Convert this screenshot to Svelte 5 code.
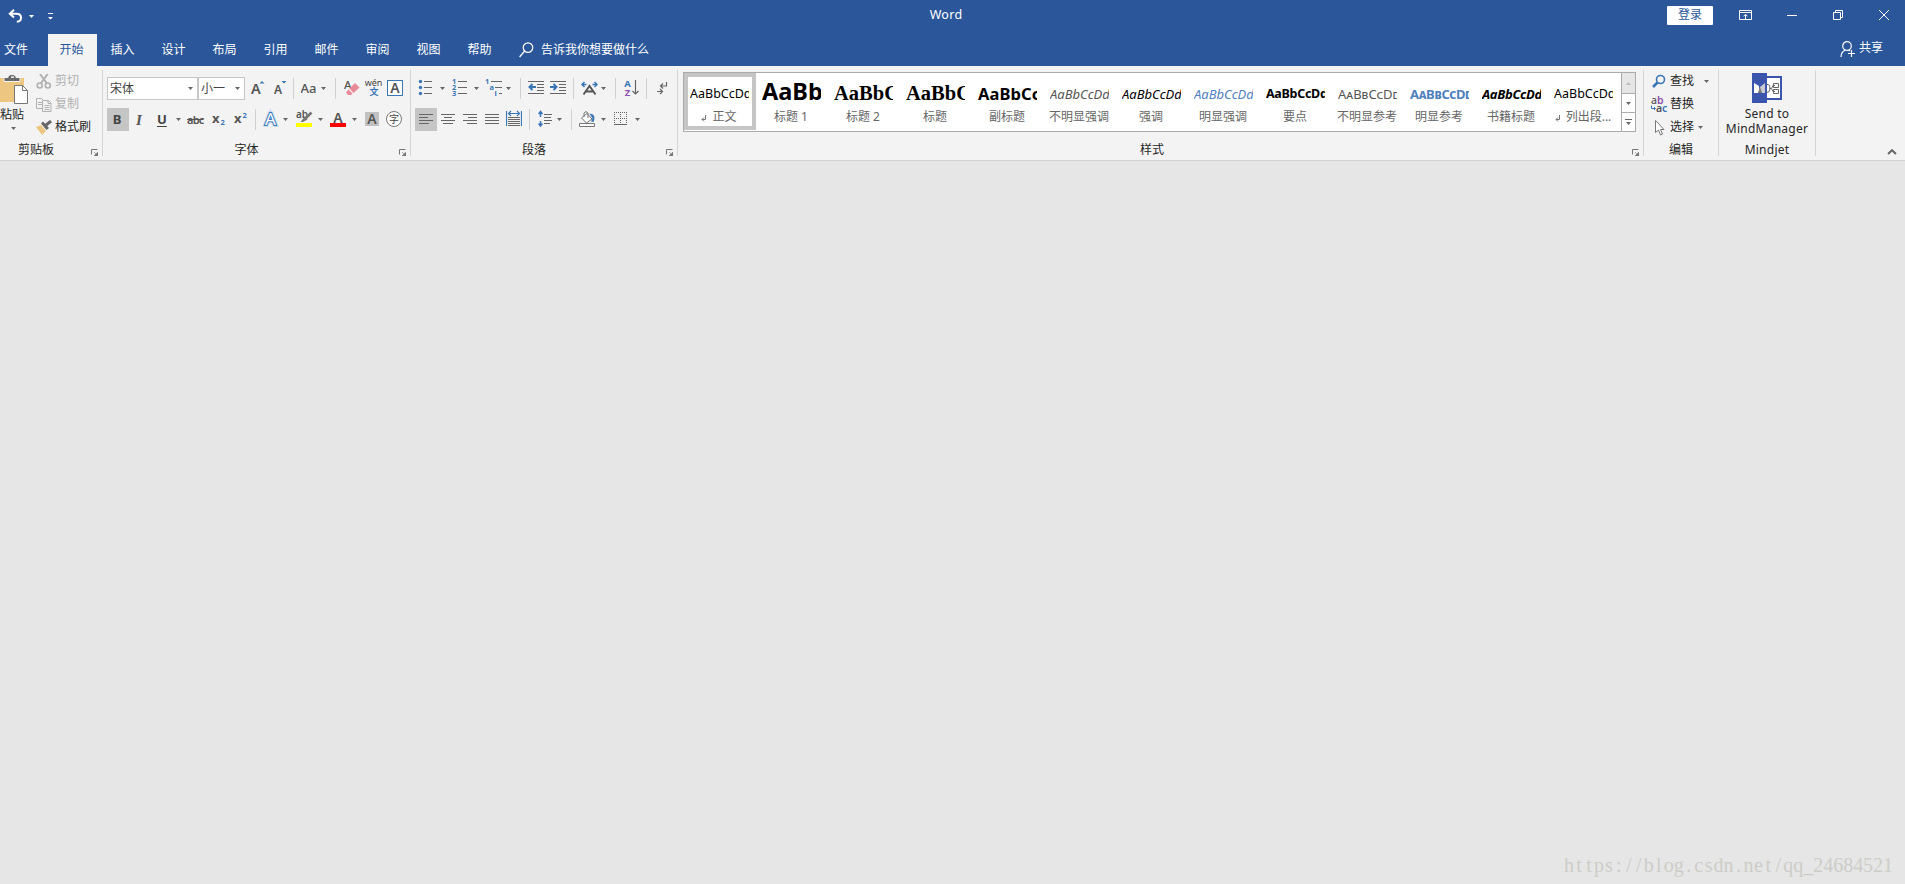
<script>
    const tabs = ["开始", "插入", "设计", "布局", "引用", "邮件", "审阅", "视图", "帮助"]
    const styles = [
        { name: "正文", look: "normal", mark: true },
        { name: "标题 1", look: "heading1" },
        { name: "标题 2", look: "heading2" },
        { name: "标题", look: "heading2" },
        { name: "副标题", look: "subtitle" },
        { name: "不明显强调", look: "italic subtle" },
        { name: "强调", look: "italic" },
        { name: "明显强调", look: "italic blue" },
        { name: "要点", look: "strong" },
        { name: "不明显参考", look: "caps subtle" },
        { name: "明显参考", look: "caps blue strong" },
        { name: "书籍标题", look: "italic strong" },
        { name: "列出段...", look: "normal", mark: true }
    ]
    const url = "https://blog.csdn.net/qq_24684521"
    // one x per glyph keeps the url monospaced
    const urlX = [...url].map((c, i) => 5 + i * 9.97).join(" ")

    let activeTab = $state("开始")
    let activeStyle = $state("正文")
    let bold = $state(true)
</script>

{#snippet caret()}
    <svg class="caret" width="5" height="3" viewBox="0 0 5 3"><path d="M0 0h5L2.5 3z"/></svg>
{/snippet}

{#snippet launcher()}
    <svg class="launcher" width="7" height="7" viewBox="0 0 7 7">
        <path d="M.5 5.5v-5h6" fill="none" stroke="#777"/>
        <path d="M7 3v4H3zM3 3l2 2" fill="#777" stroke="#777" stroke-width=".6"/>
    </svg>
{/snippet}

{#snippet lines(rows)}
    {#each rows as [x, y, w]}
        <rect {x} {y} width={w} height="1" fill="#666"/>
    {/each}
{/snippet}

<div class="word">
    <header class="titlebar">
        <div class="quick">
            <svg width="15" height="14" viewBox="0 0 15 14" fill="none" stroke="#fff" stroke-width="2">
                <path d="M6 .8L1.8 4.7 6 8.5M2 4.7h6.5c6 0 6 7.8.3 8"/>
            </svg>
            {@render caret()}
            <svg class="customize" width="5" height="7" viewBox="0 0 5 7" fill="#fff"><path d="M0 0h5v1H0zM0 4h5L2.5 6.6z"/></svg>
        </div>
        <div class="title">Word</div>
        <div class="window">
            <button class="login">登录</button>
            <svg width="13" height="10" viewBox="0 0 13 10" fill="none" stroke="#fff">
                <path d="M.5.5h12v9H.5zM.5 2.5h12M6.5 9V4.5M4.5 6.3l2-2 2 2"/>
            </svg>
            <svg width="10" height="10" viewBox="0 0 10 10"><path d="M0 5h10v1H0z" fill="#fff"/></svg>
            <svg width="10" height="10" viewBox="0 0 10 10" fill="none" stroke="#fff">
                <path d="M.5 2.5h7v7h-7zM2.5 2.5v-2h7v7h-2"/>
            </svg>
            <svg width="10" height="10" viewBox="0 0 10 10" stroke="#fff"><path d="M0 0l10 10M10 0L0 10"/></svg>
        </div>
    </header>

    <nav class="tabs">
        <button class="file">文件</button>
        {#each tabs as tab}
            <button class="tab" class:active={tab === activeTab} onclick={() => activeTab = tab}>{tab}</button>
        {/each}
        <svg class="lens" width="15" height="16" viewBox="0 0 15 16" fill="none" stroke="#fff" stroke-width="1.2">
            <circle cx="9" cy="5.6" r="4.8"/><path d="M5.6 9L.6 15"/>
        </svg>
        <span class="tell">告诉我你想要做什么</span>
        <svg class="person" width="16" height="17" viewBox="0 0 16 17" fill="none" stroke="#fff" stroke-width="1.2">
            <circle cx="7" cy="5" r="4.3"/><path d="M1 16c0-4 2-6 4.500-7M8.500 9l1.500 1M11.500 9v7M8 12.500h7"/>
        </svg>
        <span class="share">共享</span>
    </nav>

    <div class="ribbon">
        <section class="group clipboard">
            <div class="body">
                <div class="paste">
                    <svg width="28" height="31" viewBox="0 0 28 31">
                        <path d="M0 4h24v24H0z" fill="#edc681"/>
                        <path d="M4 7.500h16V3.500h-4c0-4-8-4-8 0H4z" fill="#6a6a6a" stroke="#f3f3f3"/>
                        <path d="M11 3.200h3" stroke="#f3f3f3" stroke-width="1.500"/>
                        <path d="M14.500 11.500h8l5 5v13h-13z" fill="#fff" stroke="#777"/>
                        <path d="M22.500 11.500v5h5" fill="none" stroke="#777"/>
                    </svg>
                    <span>粘贴</span>
                    {@render caret()}
                </div>
                <div class="actions">
                    <div class="action disabled">
                        <svg width="16" height="15" viewBox="0 0 16 15" fill="none" stroke="#b1b1b1" stroke-width="1.600">
                            <circle cx="3.700" cy="11.500" r="2.500"/><circle cx="11.800" cy="11.500" r="2.500"/>
                            <path d="M4 0l7 9.500M11.700 0L4.700 9.500" stroke-width="2"/>
                        </svg>
                        <span>剪切</span>
                    </div>
                    <div class="action disabled">
                        <svg width="16" height="15" viewBox="0 0 16 15" fill="#f3f3f3" stroke="#b1b1b1">
                            <path d="M.5 1.500h5l2 2v8h-7zM2 5.500h4M2 7.500h4"/>
                            <path d="M6.500 3.500h6l2.500 2.500v8.500H6.500zM12 3.500v3h3M8.500 8.500h5M8.500 10.500h5M8.500 12.500h5"/>
                        </svg>
                        <span>复制</span>
                    </div>
                    <div class="action">
                        <svg width="16" height="15" viewBox="0 0 16 15">
                            <path d="M0 7l5-2 5 6-4 4z" fill="#edc681"/>
                            <path d="M5 3.500l2-2 6 6.500-2.500 2z" fill="#666"/>
                            <path d="M9.500 5.500L15 1" stroke="#666" stroke-width="3"/>
                        </svg>
                        <span>格式刷</span>
                    </div>
                </div>
            </div>
            <footer><span>剪贴板</span>{@render launcher()}</footer>
        </section>

        <section class="group font">
            <div class="row font-top">
                <div class="combo"><span>宋体</span>{@render caret()}</div>
                <div class="combo size"><span>小一</span>{@render caret()}</div>
                <svg width="15" height="23" viewBox="0 0 15 23">
                    <text x="0" y="17" class="glyph" font-size="14.500">A</text><path d="M8.500 6.500h5L11 4z" fill="#3a76b5"/>
                </svg>
                <svg width="15" height="23" viewBox="0 0 15 23">
                    <text x="0" y="17" class="glyph" font-size="12">A</text><path d="M7.500 4h5L10 6.500z" fill="#3a76b5"/>
                </svg>
                <i class="sep"></i>
                <svg width="18" height="23" viewBox="0 0 18 23"><text x="-.5" y="15.500" class="glyph light" font-size="13">Aa</text></svg>
                {@render caret()}
                <i class="sep"></i>
                <svg width="16" height="23" viewBox="0 0 16 23">
                    <text x="0" y="12" class="glyph light" font-size="11.500">A</text>
                    <path d="M5.500 11.500L11 6l4.500 4.500-6 5.500z" fill="#e88a98"/><path d="M4.500 12.500l4 4-1.500 1.500H4l-2-2.500z" fill="#e88a98"/>
                </svg>
                <svg width="18" height="23" viewBox="0 0 18 23">
                    <text x="8.500" y="9" class="wen">wén</text><text x="9" y="18" class="cjk" font-size="9">文</text>
                </svg>
                <svg width="16" height="23" viewBox="0 0 16 23">
                    <rect x=".5" y="3.500" width="15" height="15" fill="#fff" stroke="#3a76b5"/>
                    <text x="8" y="16" class="glyph mid" font-size="14">A</text>
                </svg>
            </div>
            <div class="row font-bottom">
                <button class="toggle" class:on={bold} onclick={() => bold = !bold}><b>B</b></button>
                <span class="it">I</span>
                <span class="un">U</span>
                {@render caret()}
                <span class="strike">abc</span>
                <svg width="14" height="23" viewBox="0 0 14 23">
                    <text x="0" y="15" class="glyph heavy" font-size="13">x</text><text x="8.500" y="17" class="num">2</text>
                </svg>
                <svg width="14" height="23" viewBox="0 0 14 23">
                    <text x="0" y="15" class="glyph heavy" font-size="13">x</text><text x="8.500" y="10" class="num">2</text>
                </svg>
                <i class="sep"></i>
                <svg width="17" height="23" viewBox="0 0 17 23">
                    <text x="7.500" y="17" class="outline halo" font-size="17">A</text>
                    <text x="7.500" y="17" class="outline edge" font-size="17">A</text>
                    <text x="7.500" y="17" class="outline" font-size="17">A</text>
                </svg>
                {@render caret()}
                <svg width="17" height="23" viewBox="0 0 17 23">
                    <text x="0" y="10" class="glyph" font-size="10">ab</text>
                    <path d="M15.500 4.500L9 11" stroke="#777" stroke-width="2.500"/><path d="M8.500 9l3 2.500L7 14H4.500z" fill="#777"/>
                    <path d="M0 15h16v4H0z" fill="#ff0"/>
                </svg>
                {@render caret()}
                <svg width="16" height="23" viewBox="0 0 16 23">
                    <text x="8" y="15" class="glyph mid" font-size="14">A</text><path d="M0 15h16v4H0z" fill="#f00"/>
                </svg>
                {@render caret()}
                <svg width="14" height="23" viewBox="0 0 14 23">
                    <path d="M0 4h14v14H0z" fill="#c1c1c1"/><text x="7" y="16" class="glyph mid" font-size="14">A</text>
                </svg>
                <svg width="17" height="23" viewBox="0 0 17 23">
                    <circle cx="8" cy="11" r="7.500" fill="#fff" stroke="#777"/><text x="8" y="14.500" class="cjk dark" font-size="10">字</text>
                </svg>
            </div>
            <footer><span>字体</span>{@render launcher()}</footer>
        </section>

        <section class="group paragraph">
            <div class="row para-top">
                <svg width="18" height="23" viewBox="0 0 18 23">
                    {#each [4, 10, 16] as y}
                        <circle cx="5.500" cy={y + .5} r="1.700" fill="#3a76b5"/>
                    {/each}
                    {@render lines([[9, 4, 8], [9, 10, 8], [9, 16, 8]])}
                </svg>
                {@render caret()}
                <svg width="16" height="23" viewBox="0 0 16 23">
                    <text x="0" y="7" class="num">1</text><text x="0" y="13" class="num">2</text><text x="0" y="19" class="num">3</text>
                    {@render lines([[6, 4, 9], [6, 10, 9], [6, 16, 9]])}
                </svg>
                {@render caret()}
                <svg width="18" height="23" viewBox="0 0 18 23">
                    <text x="0" y="7" class="num">1</text><text x="4.500" y="13" class="num">a</text><text x="9.500" y="19" class="num">i</text>
                    {@render lines([[6, 4, 11], [10, 10, 7], [14, 16, 3]])}
                </svg>
                {@render caret()}
                <i class="sep"></i>
                <svg width="16" height="23" viewBox="0 0 16 23">
                    {@render lines([[0, 4, 16], [9, 7, 7], [9, 10, 7], [9, 13, 7], [0, 16, 16]])}
                    <path d="M8 10H2M4.500 7L1.500 10l3 3" stroke="#3a76b5" stroke-width="2" fill="none"/>
                </svg>
                <svg width="16" height="23" viewBox="0 0 16 23">
                    {@render lines([[0, 4, 16], [9, 7, 7], [9, 10, 7], [9, 13, 7], [0, 16, 16]])}
                    <path d="M0 10h6M3.500 7l3 3-3 3" stroke="#3a76b5" stroke-width="2" fill="none"/>
                </svg>
                <i class="sep"></i>
                <svg width="17" height="23" viewBox="0 0 17 23">
                    <path d="M5.500 7.500h-4M3.500 5L1 7.500 3.500 10M11.500 7.500h4M13.500 5L16 7.500 13.500 10" stroke="#3a76b5" stroke-width="1.500" fill="none"/>
                    <path d="M2.500 17.500l6-8.500 6 8.500M5 14.500h7" stroke="#555" stroke-width="1.900" fill="none"/>
                </svg>
                {@render caret()}
                <i class="sep"></i>
                <svg width="15" height="23" viewBox="0 0 15 23">
                    <text x="3.500" y="10" class="sort">A</text><text x="3.500" y="18.500" class="sort z">Z</text>
                    <path d="M11.500 3v14M8.500 14l3 3 3-3" stroke="#666" fill="none" stroke-width="1.200"/>
                </svg>
                <i class="sep"></i>
                <svg width="12" height="23" viewBox="0 0 12 23" fill="none" stroke="#666" stroke-width="1.200">
                    <path d="M9.500 5v4H4M6 6.500L3.500 9 6 11.500M0 14.500h5M3 12l2.500 2.500L3 17"/>
                </svg>
            </div>
            <div class="row para-bottom">
                <button class="toggle on">
                    <svg width="22" height="23" viewBox="0 0 22 23">{@render lines([[4, 6, 14], [4, 9, 9], [4, 12, 14], [4, 15, 10]])}</svg>
                </button>
                <svg width="14" height="23" viewBox="0 0 14 23">{@render lines([[0, 6, 14], [3, 9, 8], [0, 12, 14], [2, 15, 10]])}</svg>
                <svg width="14" height="23" viewBox="0 0 14 23">{@render lines([[0, 6, 14], [5, 9, 9], [0, 12, 14], [4, 15, 10]])}</svg>
                <svg width="14" height="23" viewBox="0 0 14 23">{@render lines([[0, 6, 14], [0, 9, 14], [0, 12, 14], [0, 15, 14]])}</svg>
                <svg width="16" height="23" viewBox="0 0 16 23">
                    <path d="M.5 3v15M15.500 3v15M3 5.500h10M5 3L2.500 5.500 5 8M11 3l2.500 2.500L11 8" stroke="#3a76b5" fill="none" stroke-width="1.200"/>
                    {@render lines([[2, 9, 12], [2, 11, 12], [2, 13, 12], [2, 15, 12], [2, 17, 12]])}
                </svg>
                <i class="sep"></i>
                <svg width="16" height="23" viewBox="0 0 16 23">
                    <path d="M2.500 4v5M.5 6l2-2.500 2 2.500M2.500 13v5M.5 15.500l2 2.500 2-2.500" stroke="#3a76b5" fill="none" stroke-width="1.500"/>
                    {@render lines([[6, 6, 8], [6, 9, 7], [6, 12, 8], [6, 15, 6]])}
                </svg>
                {@render caret()}
                <i class="sep"></i>
                <svg width="18" height="23" viewBox="0 0 18 23">
                    <path d="M3.500 10l5.500-4.500 5 5.500-5.500 4z" fill="#fff" stroke="#777"/>
                    <path d="M6 9V5q2-3 4 0v5" fill="none" stroke="#777"/><path d="M11.500 5.500q7 .5 4 8.500l-2.500-.5 1.500-3z" fill="#3a76b5"/>
                    <path d="M1.500 15.500h15v3h-15z" fill="#fff" stroke="#777"/>
                </svg>
                {@render caret()}
                <svg width="14" height="23" viewBox="0 0 14 23" fill="none" stroke="#666">
                    <path d="M.5 4v12M6.500 4v12M12.500 4v12M0 4.500h13M0 10.500h13" stroke-dasharray="1 1"/><path d="M0 16.500h13"/>
                </svg>
                {@render caret()}
            </div>
            <footer><span>段落</span>{@render launcher()}</footer>
        </section>

        <section class="group styles">
            <div class="gallery">
                {#each styles as style}
                    <button class="style" class:selected={style.name === activeStyle} onclick={() => activeStyle = style.name}>
                        <span class="preview {style.look}">AaBbCcDd</span>
                        <span class="name">
                            {#if style.mark}
                                <svg width="6" height="7" viewBox="0 0 6 7" fill="none" stroke="#777"><path d="M4.500 0v4.500H1M3 2.500L1 4.500l2 2"/></svg>
                            {/if}
                            {style.name}
                        </span>
                    </button>
                {/each}
                <div class="scroll">
                    <div class="up"><svg width="5" height="3" viewBox="0 0 5 3"><path d="M0 3h5L2.500 0z" fill="#bbb"/></svg></div>
                    <div>{@render caret()}</div>
                    <div><svg width="7" height="7" viewBox="0 0 7 7" fill="#666"><path d="M0 0h7v1H0zM1 3h5L3.500 6z"/></svg></div>
                </div>
            </div>
            <footer><span>样式</span>{@render launcher()}</footer>
        </section>

        <section class="group editing">
            <div class="actions">
                <div class="action">
                    <svg width="19" height="15" viewBox="0 0 19 15" fill="none" stroke="#3a76b5">
                        <circle cx="9.500" cy="5.500" r="4" stroke-width="1.600"/><path d="M6.500 8.500L2 13" stroke-width="2.600"/>
                    </svg>
                    <span>查找</span><div class="far">{@render caret()}</div>
                </div>
                <div class="action">
                    <svg width="19" height="17" viewBox="0 0 19 17">
                        <text x="0" y="8" class="glyph light" font-size="10.500">a</text><text x="6" y="8" class="glyph purple" font-size="10.500">b</text>
                        <text x="5" y="16" class="glyph" font-size="10.500">a</text><text x="11" y="16" class="glyph azure" font-size="10.500">c</text>
                        <path d="M.5 9.500v3H4M3 11l1.500 1.500L3 14" fill="none" stroke="#3a76b5"/>
                    </svg>
                    <span>替换</span>
                </div>
                <div class="action">
                    <svg width="19" height="17" viewBox="0 0 19 17">
                        <path d="M4.500 1.500v12l3-2.500 2 5 2-1-2-4.500h3.500z" fill="#fff" stroke="#777"/>
                    </svg>
                    <span>选择</span><div class="near">{@render caret()}</div>
                </div>
            </div>
            <footer><span>编辑</span></footer>
        </section>

        <section class="group mindjet">
            <svg width="30" height="30" viewBox="0 0 30 30">
                <path d="M14 4h15v22H14z" fill="#fff" stroke="#3b55ad" stroke-width="2"/>
                <path d="M0 0h15v30H0z" fill="#3b55ad"/>
                <path d="M2 10l5 3v7H2z" fill="#fff"/><path d="M13 10l-5 4-2 6h7z" fill="#c9cbd2"/><path d="M6 20l2-6 2 6z" fill="#777"/>
                <path d="M15 11.500h1q2 0 2 4t-3 4M23 12.500h-2q-3 3 0 6h2M17.500 15.500h2M21.500 10.500h5v4h-5zM21.500 16.500h5v4h-5z" fill="none" stroke="#666"/>
            </svg>
            <span>Send to</span>
            <span>MindManager</span>
            <footer><span>Mindjet</span></footer>
        </section>

        <svg class="collapse" width="10" height="6" viewBox="0 0 10 6" fill="none" stroke="#666" stroke-width="2"><path d="M1 5l4-3.800L9 5"/></svg>
    </div>

    <main class="canvas">
        <svg class="url" width="330" height="26" viewBox="0 0 330 26"><text x={urlX} y="17.500">{url}</text></svg>
    </main>
</div>

<style>
  :global(body) {
    overflow: hidden;
    margin: 0;
  }

  .word {
    display: flex;
    flex-direction: column;
    width: 1905px;
    height: 884px;
    font-family: "Noto Sans", "Noto Sans CJK SC", sans-serif;
    font-size: 12px;
    line-height: 14px;
    color: #262626;
    background-color: #e6e6e6;
  }

  svg {
    display: block;
    flex: none;
  }

  button {
    margin: 0;
    padding: 0;
    border: none;
    font: inherit;
    color: inherit;
    background: none;
  }

  .caret {
    fill: #666;
  }

  .titlebar {
    display: grid;
    grid-template-columns: 1fr 40px 1fr;
    align-items: center;
    height: 34px;
    color: #fff;
    background-color: #2b579a;
  }

  .quick {
    display: flex;
    align-items: center;
    margin-top: -2px;
    padding-left: 8px;
  }

  .quick .caret {
    margin-left: 6px;
    fill: #fff;
  }

  .customize {
    margin: 1px 0 0 14px;
  }

  .title {
    font-size: 12.5px;
    margin: -5px 0 0 -13px;
    text-align: center;
    letter-spacing: .3px;
  }

  .window {
    display: flex;
    align-items: center;
    justify-content: flex-end;
    margin-top: -4px;
    padding-right: 16px;
    gap: 36px;
  }

  .login {
    width: 46px;
    height: 19px;
    margin-right: -10px;
    color: #2b579a;
    border-radius: 1px;
    background-color: #fff;
  }

  .window svg:nth-child(3) {
    margin-left: -1px;
  }

  .tabs {
    display: flex;
    align-items: center;
    height: 32px;
    color: #fff;
    background-color: #2b579a;
  }

  .file {
    width: 24px;
    margin: 0 20px 0 4px;
    white-space: nowrap;
  }

  .tab {
    width: 49px;
    height: 32px;
    margin-right: 2px;
    padding: 0 2px 1px 0;
  }

  .tab.active {
    color: #2b579a;
    background-color: #f3f3f3;
  }

  .lens {
    margin-left: 12px;
  }

  .tell {
    margin-left: 7px;
  }

  .person {
    margin: -1px 3px 0 auto;
  }

  .share {
    margin: -4px 22px 0 0;
  }

  .ribbon {
    display: flex;
    height: 86px;
    padding: 4px 0;
    border-bottom: 1px solid #d2d2d2;
    background-color: #f3f3f3;
  }

  .group {
    display: flex;
    flex-direction: column;
    box-sizing: border-box;
    border-right: 1px solid #d4d4d4;
  }

  footer {
    display: flex;
    align-items: flex-end;
    height: 14px;
    margin-top: auto;
    text-align: center;
  }

  footer span {
    flex: 1;
    height: 13px;
  }

  .launcher {
    margin: 0 4px 0 6px;
  }

  .clipboard {
    width: 103px;
  }

  .clipboard footer {
    margin-left: -13px;
  }

  .body {
    display: flex;
  }

  .paste {
    display: flex;
    flex-direction: column;
    width: 36px;
    padding-top: 4px;
  }

  .paste span {
    margin-top: 3px;
  }

  .paste .caret {
    margin: 5px 0 0 11px;
  }

  .actions {
    display: grid;
    grid-template-rows: repeat(3, 23px);
  }

  .action {
    display: flex;
    align-items: center;
  }

  .action span {
    margin-top: -2px;
  }

  .clipboard .action {
    gap: 3px;
  }

  .disabled {
    color: #b1b1b1;
  }

  .font {
    width: 308px;
    padding: 7px 0 0 4px;
  }

  .paragraph {
    width: 267px;
    padding: 7px 0 0 4px;
  }

  .font footer, .paragraph footer {
    margin-left: -7px;
  }

  .row {
    display: grid;
    align-items: center;
    height: 23px;
    margin-bottom: 8px;
  }

  .font-top {
    grid-template-columns: 91px 53px 23px 19px 8px 20px 14px 9px 21px 22px 16px;
  }

  .font-bottom {
    grid-template-columns: 29px 21px 19px 11px 25px 22px 21px 8px 20px 13px 22px 12px 22px 13px 21px 17px;
  }

  .para-top {
    grid-template-columns: 25px 12px 22px 11px 21px 14px 8px 22px 23px 8px 20px 14px 9px 22px 11px 12px;
  }

  .para-bottom {
    grid-template-columns: 26px 22px 22px 21px 23px 9px 19px 14px 7px 23px 13px 21px 6px;
  }

  .combo {
    display: flex;
    align-items: center;
    justify-content: space-between;
    box-sizing: border-box;
    height: 23px;
    padding: 0 4px 0 2px;
    color: #444;
    border: 1px solid #c6c6c6;
    background-color: #fff;
  }

  .combo.size {
    width: 47px;
  }

  .sep {
    width: 1px;
    height: 21px;
    background-color: #d0d0d0;
  }

  .toggle {
    width: 22px;
    height: 23px;
    color: #444;
  }

  .toggle.on {
    background-color: #c5c5c5;
  }

  .toggle b {
    margin-right: 2px;
    font-size: 13px;
  }

  .it {
    font-family: "Liberation Serif", serif;
    font-size: 15px;
    font-weight: bold;
    font-style: italic;
    color: #555;
  }

  .un {
    margin-top: -2px;
    font-size: 13px;
    font-weight: bold;
    text-decoration: underline;
    text-underline-offset: 2px;
    color: #444;
  }

  .strike {
    font-size: 11px;
    font-weight: 600;
    text-decoration: line-through;
    letter-spacing: -.8px;
    color: #555;
  }

  .glyph {
    font-weight: 600;
    fill: #555;
  }

  .light {
    font-weight: 500;
  }

  .heavy {
    font-weight: bold;
  }

  .mid, .wen, .cjk, .sort, .outline {
    text-anchor: middle;
  }

  .wen {
    font-size: 9px;
    fill: #444;
  }

  .cjk {
    font-weight: bold;
    fill: #3a76b5;
  }

  .cjk.dark {
    font-weight: normal;
    fill: #444;
  }

  .num {
    font-size: 7.5px;
    font-weight: bold;
    fill: #3a76b5;
  }

  .outline {
    fill: #fff;
  }

  .edge {
    stroke: #3a76b5;
    stroke-width: 2px;
  }

  .halo {
    stroke: #cfe0f2;
    stroke-width: 4px;
  }

  .sort {
    font-size: 9.5px;
    font-weight: bold;
    fill: #3a76b5;
  }

  .z, .purple {
    fill: #8d50ac;
  }

  .azure {
    fill: #3a76b5;
  }

  .styles {
    width: 966px;
    padding-top: 2px;
  }

  .gallery {
    display: flex;
    box-sizing: border-box;
    width: 953px;
    height: 60px;
    margin-left: 5px;
    border: 1px solid #ababab;
    background-color: #fff;
  }

  .style {
    display: flex;
    flex-direction: column;
    box-sizing: border-box;
    width: 72px;
    height: 57px;
    padding: 6px 3px 0 2px;
    border: 4px solid transparent;
  }

  .style.selected {
    border-color: #c5c5c5;
  }

  .preview {
    flex: none;
    overflow: hidden;
    width: 59px;
    height: 24px;
    font-size: 12.5px;
    line-height: 22px;
    text-align: left;
    color: #000;
  }

  .heading1 {
    font-size: 23.5px;
    font-weight: bold;
    line-height: 17px;
  }

  .heading2 {
    font-family: "Liberation Serif", serif;
    font-size: 20.5px;
    font-weight: bold;
    line-height: 20px;
  }

  .subtitle {
    font-size: 16.5px;
    font-weight: bold;
    letter-spacing: .1px;
  }

  .italic {
    font-size: 13px;
    font-style: italic;
  }

  .strong {
    font-weight: bold;
    letter-spacing: -.3px;
  }

  .caps {
    font-size: 13px;
    font-variant: small-caps;
  }

  .subtle {
    color: #555;
  }

  .blue {
    color: #4f81bd;
  }

  .name {
    display: flex;
    align-items: center;
    justify-content: center;
    width: 66px;
    margin: 3px 0 0 -4px;
    gap: 5px;
    white-space: nowrap;
    color: #666;
  }

  .name svg {
    margin-top: 2px;
  }

  .scroll {
    display: grid;
    grid-template-rows: 20px 18px 18px;
    width: 13px;
    margin-left: auto;
    border-left: 1px solid #ababab;
    gap: 1px;
    background-color: #ababab;
  }

  .scroll div {
    display: grid;
    place-items: center;
    background-color: #fff;
  }

  .scroll .up {
    background-color: #e6e6e6;
  }

  .editing {
    width: 75px;
  }

  .editing .action {
    padding-left: 7px;
  }

  .far {
    margin-left: 10px;
  }

  .near {
    margin-left: 4px;
  }

  .mindjet {
    align-items: center;
    width: 97px;
    padding-top: 3px;
    letter-spacing: .25px;
  }

  .mindjet > span {
    line-height: 15px;
  }

  .mindjet > svg {
    margin-bottom: 3px;
  }

  .collapse {
    align-self: flex-end;
    margin: 0 8px 1px auto;
  }

  .canvas {
    display: flex;
    align-items: flex-end;
    justify-content: flex-end;
    flex: 1;
    padding: 0 11px 4px 0;
  }

  .url text {
    font-family: "Liberation Serif", serif;
    font-size: 20px;
    text-anchor: middle;
    fill: #cdcdc8;
  }
</style>
